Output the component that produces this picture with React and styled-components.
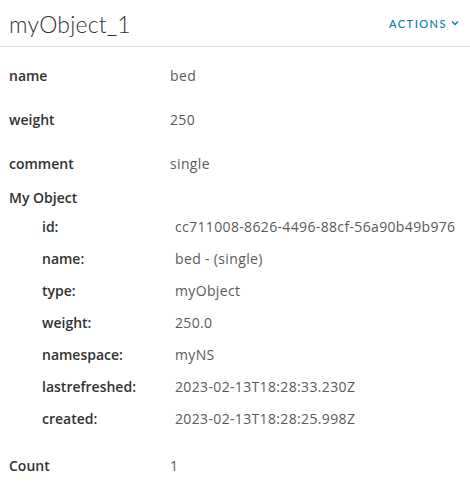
import React from 'react';
import styled, { createGlobalStyle } from 'styled-components';

const GlobalStyle = createGlobalStyle`
  html, body {
    margin: 0;
    padding: 0;
    background: #fff;
  }
  body {
    font-family: "Open Sans", Lato, sans-serif;
  }
`;

const Page = styled.div`
  width: 470px;
  height: 486px;
  overflow: hidden;
  background: #fff;
`;

const Header = styled.div`
  display: flex;
  justify-content: space-between;
  align-items: center;
  height: 46px;
  padding: 0 11px 0 9px;
  border-bottom: 1px solid #dcdcdc;
`;

const Title = styled.h1`
  margin: 0;
  font-family: Lato, sans-serif;
  font-size: 23px;
  font-weight: 300;
  color: #313131;
  letter-spacing: 0.2px;
  padding-top: 2px;
`;

const ActionsButton = styled.button`
  display: flex;
  align-items: center;
  gap: 4px;
  border: none;
  background: none;
  padding: 0;
  font-family: Lato, sans-serif;
  font-size: 11px;
  font-weight: 500;
  letter-spacing: 1.5px;
  color: #0079b8;
  cursor: pointer;
`;

const Body = styled.div`
  padding: 6px 9px 0 9px;
`;

const Row = styled.div`
  display: grid;
  grid-template-columns: ${({ labelWidth }) => labelWidth}px 1fr;
  align-items: center;
  height: ${({ h }) => h}px;
  padding-left: ${({ indent }) => indent || 0}px;
  font-size: 14px;
`;

const Label = styled.span`
  font-weight: 600;
  color: #313131;
`;

const Value = styled.span`
  color: #5a5a5a;
  letter-spacing: 0.35px;
`;

const Section = styled.div`
  display: flex;
  align-items: center;
  height: 24px;
  font-size: 14px;
  font-weight: 600;
  color: #313131;
`;

const Nested = styled.div`
  padding-top: 1px;
  padding-bottom: 9px;
`;

const Chevron = () => (
  <svg width="8" height="6" viewBox="0 0 8 6" fill="none">
    <path d="M1 1.5 L4 4.5 L7 1.5" stroke="#0079b8" strokeWidth="1.3" />
  </svg>
);

const top = [
  ['name', 'bed'],
  ['weight', '250'],
  ['comment', 'single'],
];

const nested = [
  ['id:', 'cc711008-8626-4496-88cf-56a90b49b976'],
  ['name:', 'bed - (single)'],
  ['type:', 'myObject'],
  ['weight:', '250.0'],
  ['namespace:', 'myNS'],
  ['lastrefreshed:', '2023-02-13T18:28:33.230Z'],
  ['created:', '2023-02-13T18:28:25.998Z'],
];

export default function App() {
  return (
    <Page>
      <GlobalStyle />
      <Header>
        <Title>myObject_1</Title>
        <ActionsButton>
          ACTIONS
          <Chevron />
        </ActionsButton>
      </Header>
      <Body>
        {top.map(([k, v]) => (
          <Row key={k} h={44} labelWidth={161}>
            <Label>{k}</Label>
            <Value>{v}</Value>
          </Row>
        ))}
        <Section>My Object</Section>
        <Nested>
          {nested.map(([k, v]) => (
            <Row key={k} h={32} indent={33} labelWidth={133}>
              <Label>{k}</Label>
              <Value>{v}</Value>
            </Row>
          ))}
        </Nested>
        <Row h={44} labelWidth={161}>
          <Label>Count</Label>
          <Value>1</Value>
        </Row>
      </Body>
    </Page>
  );
}
